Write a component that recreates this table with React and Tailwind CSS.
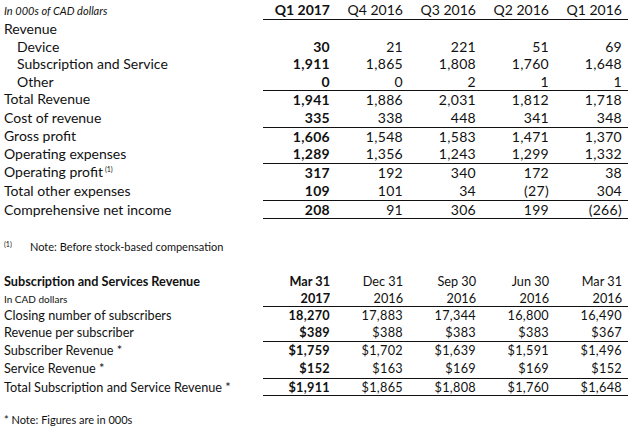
import React from "react";

const cols = ["Q1 2017", "Q4 2016", "Q3 2016", "Q2 2016", "Q1 2016"];

const top = [
  { label: "Revenue", vals: null, h: "h-[18px]" },
  { label: "Device", indent: true, vals: ["30", "21", "221", "51", "69"], h: "h-[17px]" },
  { label: "Subscription and Service", indent: true, vals: ["1,911", "1,865", "1,808", "1,760", "1,648"], h: "h-[18px]" },
  { label: "Other", indent: true, vals: ["0", "0", "2", "1", "1"], h: "h-[17px]" },
  { label: "Total Revenue", vals: ["1,941", "1,886", "2,031", "1,812", "1,718"], h: "h-[18px]", line: true },
  { label: "Cost of revenue", vals: ["335", "338", "448", "341", "348"], h: "h-[19px]" },
  { label: "Gross profit", vals: ["1,606", "1,548", "1,583", "1,471", "1,370"], h: "h-[18px]", line: true },
  { label: "Operating expenses", vals: ["1,289", "1,356", "1,243", "1,299", "1,332"], h: "h-[18px]" },
  { label: "Operating profit", sup: true, vals: ["317", "192", "340", "172", "38"], h: "h-[18px]", line: true },
  { label: "Total other expenses", vals: ["109", "101", "34", "(27)", "304"], h: "h-[19px]" },
  { label: "Comprehensive net income", vals: ["208", "91", "306", "199", "(266)"], h: "h-[19px]", line: true, bottom: true },
];

const bottom = [
  { label: "Closing number of subscribers", vals: ["18,270", "17,883", "17,344", "16,800", "16,490"], h: "h-[17px]" },
  { label: "Revenue per subscriber", vals: ["$389", "$388", "$383", "$383", "$367"], h: "h-[17px]" },
  { label: "Subscriber Revenue *", vals: ["$1,759", "$1,702", "$1,639", "$1,591", "$1,496"], h: "h-[18px]", line: true },
  { label: "Service Revenue *", vals: ["$152", "$163", "$169", "$169", "$152"], h: "h-[19px]" },
  { label: "Total Subscription and Service Revenue *", vals: ["$1,911", "$1,865", "$1,808", "$1,760", "$1,648"], h: "h-[18px]", line: true, bottom: true },
];

function Row({ r }) {
  return (
    <div className={`flex ${r.h}`}>
      <div className={`w-[263px] flex items-center ${r.indent ? "pl-[17px]" : "pl-[4px]"} whitespace-nowrap`}>
        {r.label}
        {r.sup && <span className="text-[7px] ml-[2px] -mt-[6px]">(1)</span>}
      </div>
      {[0, 1, 2, 3, 4].map((i) => (
        <div
          key={i}
          className={`w-[73px] flex items-center justify-end pr-[6px] tracking-[0.3px] ${r.line ? "border-t border-[#111]" : ""} ${r.bottom ? "border-b border-[#111]" : ""} ${i === 0 ? "font-bold" : ""}`}
        >
          {r.vals ? r.vals[i] : ""}
        </div>
      ))}
    </div>
  );
}

export default function App() {
  return (
    <div className="w-[635px] h-[435px] bg-white text-[#111] text-[14px] leading-none overflow-hidden" style={{ fontFamily: "Lato, 'Open Sans', sans-serif" }}>
      <div className="flex h-[20px]">
        <div className="w-[263px] flex items-center pl-[4px] italic text-[11px]">In 000s of CAD dollars</div>
        {cols.map((c, i) => (
          <div key={c} className={`w-[73px] flex items-center justify-end pr-[6px] border-b border-[#111] ${i === 0 ? "font-bold" : ""}`}>{c}</div>
        ))}
      </div>
      {top.map((r) => (
        <Row key={r.label} r={r} />
      ))}
      <div className="h-[54px] flex items-center pl-[4px] text-[11px]">
        <span className="text-[7px] w-[26px] -mt-[3px]">(1)</span>
        <span>Note: Before stock-based compensation</span>
      </div>
      <div className="text-[12.7px]">
        <div className="flex h-[17px]">
          <div className="w-[263px] flex items-center pl-[4px] font-bold">Subscription and Services Revenue</div>
          {["Mar 31", "Dec 31", "Sep 30", "Jun 30", "Mar 31"].map((c, i) => (
            <div key={i} className={`w-[73px] flex items-center justify-end pr-[6px] ${i === 0 ? "font-bold" : ""}`}>{c}</div>
          ))}
        </div>
        <div className="flex h-[17px]">
          <div className="w-[263px] flex items-center pl-[4px] text-[10px]">In CAD dollars</div>
          {["2017", "2016", "2016", "2016", "2016"].map((c, i) => (
            <div key={i} className={`w-[73px] flex items-center justify-end pr-[6px] border-b border-[#111] ${i === 0 ? "font-bold" : ""}`}>{c}</div>
          ))}
        </div>
        {bottom.map((r) => (
          <Row key={r.label} r={r} />
        ))}
      </div>
      <div className="h-[46px] flex items-center pl-[4px] text-[11px]">* Note: Figures are in 000s</div>
    </div>
  );
}
